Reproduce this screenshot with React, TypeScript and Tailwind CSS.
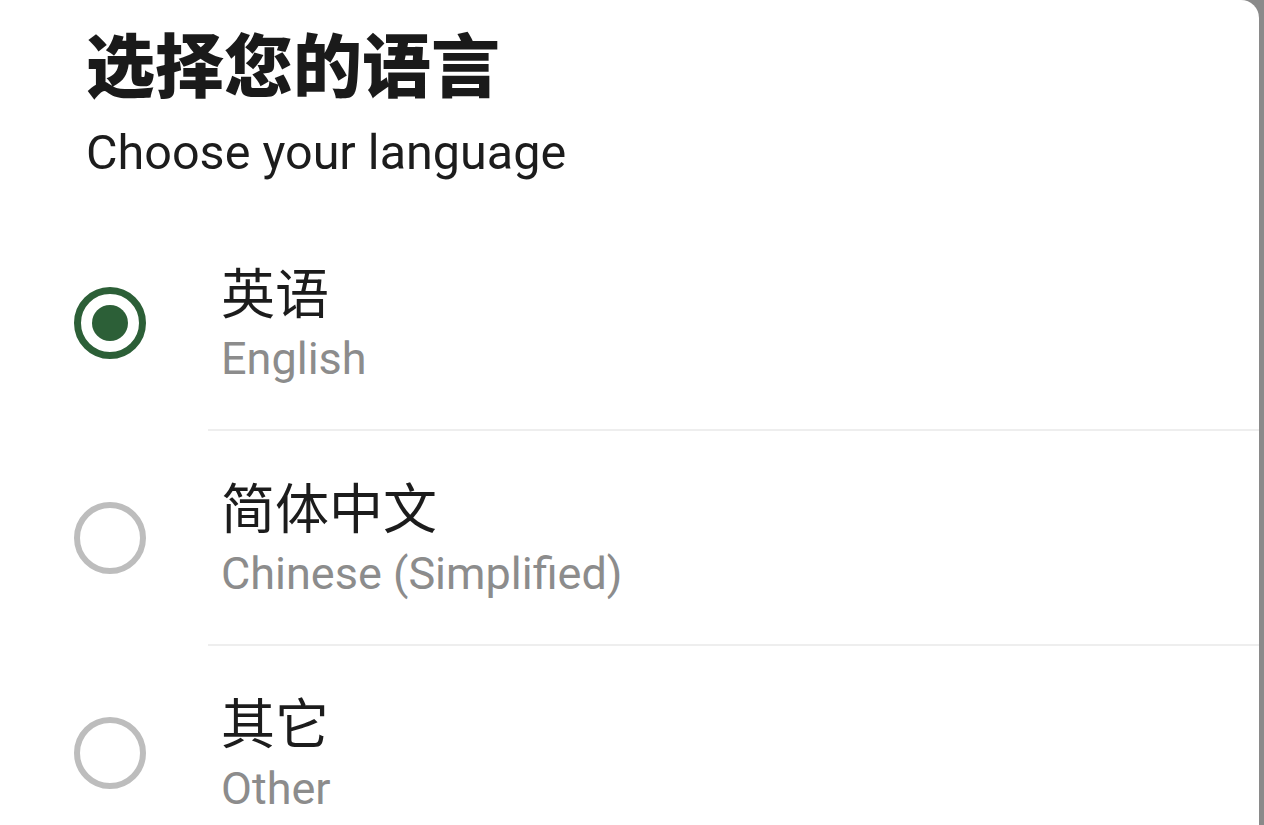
import React, { useState } from "react";

const languages = [
  { label: "英语", sub: "English" },
  { label: "简体中文", sub: "Chinese (Simplified)" },
  { label: "其它", sub: "Other" },
];

const Radio = ({ checked }: { checked: boolean }) => {
  return (
    <div
      className={`w-[72px] h-[72px] rounded-full flex items-center justify-center shrink-0 ${
        checked ? "border-[7px] border-[#2c5f37]" : "border-[6px] border-[#bdbdbd]"
      }`}
    >
      {checked && <div className="w-[36px] h-[36px] rounded-full bg-[#2c5f37]" />}
    </div>
  );
};

const App = () => {
  const [selected, setSelected] = useState(0);

  return (
    <div className="w-[1264px] h-[825px] overflow-hidden flex bg-[#8a8a8a]">
      <div className="w-[1259px] h-full bg-white rounded-tr-[18px] flex flex-col">
        {/* Header */}
        <div className="h-[216px] shrink-0 pl-[86px] pt-[28px]">
          <div
            className="text-[69px] leading-[69px] font-black text-[#1a1a1a]"
            style={{ fontFamily: '"Noto Sans CJK SC", sans-serif' }}
          >
            选择您的语言
          </div>
          <div
            className="mt-[28px] text-[48.5px] leading-[56px] text-[#1c1c1c]"
            style={{ fontFamily: 'Roboto, "Noto Sans", sans-serif' }}
          >
            Choose your language
          </div>
        </div>

        {/* Options */}
        {languages.map((lang, i) => (
          <div key={lang.sub} className="shrink-0">
            {i > 0 && <div className="ml-[208px] h-[2px] bg-[#eeeeee]" />}
            <button
              onClick={() => setSelected(i)}
              className="w-full h-[213px] flex items-center pl-[74px] gap-[75px] text-left"
            >
              <Radio checked={selected === i} />
              <div className="flex flex-col">
                <span
                  className="text-[54px] leading-[64px] text-[#1c1c1c]"
                  style={{ fontFamily: '"Noto Sans CJK SC", sans-serif' }}
                >
                  {lang.label}
                </span>
                <span
                  className="mt-[8px] text-[45px] leading-[56px] text-[#8c8c8c]"
                  style={{ fontFamily: 'Roboto, "Noto Sans", sans-serif' }}
                >
                  {lang.sub}
                </span>
              </div>
            </button>
          </div>
        ))}
      </div>
    </div>
  );
};

export default App;
